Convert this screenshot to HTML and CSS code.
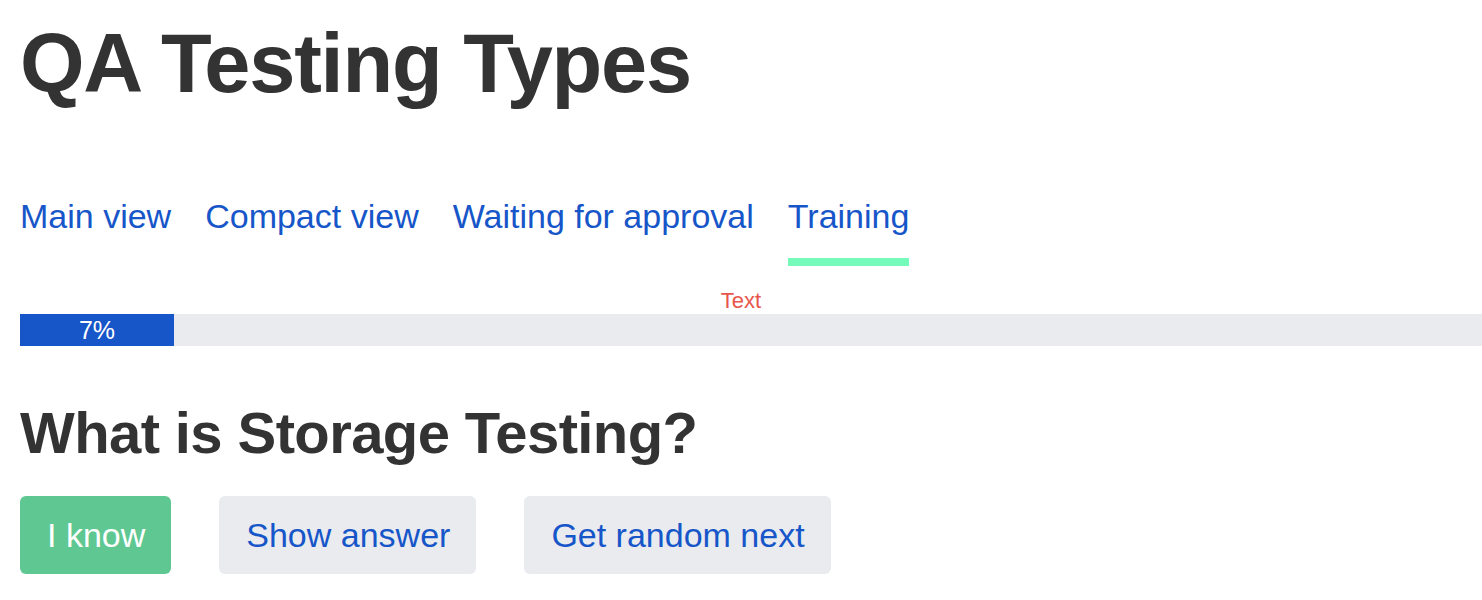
FILE: index.html
```html
<!DOCTYPE html>
<html lang="en">
<head>
<meta charset="utf-8">
<title>QA Testing Types</title>
<link rel="stylesheet" href="styles.css">
</head>
<body>
<div class="page">
  <h1 class="title">QA Testing Types</h1>
  <nav class="tabs">
    <a class="tab" href="#">Main view</a>
    <a class="tab" href="#">Compact view</a>
    <a class="tab" href="#">Waiting for approval</a>
    <a class="tab tab-active" href="#">Training</a>
  </nav>
  <div class="progress-label">Text</div>
  <div class="progress">
    <div class="progress-fill" style="width:154px">7%</div>
  </div>
  <h2 class="question">What is Storage Testing?</h2>
  <div class="actions">
    <button class="btn btn-success">I know</button>
    <button class="btn btn-light">Show answer</button>
    <button class="btn btn-light">Get random next</button>
  </div>
</div>
</body>
</html>
```

FILE: styles.css
```css
html, body {
  margin: 0;
  padding: 0;
  background: #ffffff;
  overflow: hidden;
}

body {
  font-family: "Liberation Sans", Arial, Helvetica, sans-serif;
  color: #333333;
}

.page {
  padding: 0 20px;
}

.title {
  margin: 22px 0 0 0;
  font-size: 83px;
  line-height: 84px;
  font-weight: bold;
  letter-spacing: -1.2px;
  color: #333333;
}

.tabs {
  display: flex;
  gap: 34px;
  margin-top: 90px;
}

.tab {
  display: block;
  font-size: 34px;
  line-height: 40px;
  color: #1656c9;
  text-decoration: none;
  padding-bottom: 22px;
  border-bottom: 8px solid transparent;
}

.tab-active {
  border-bottom-color: #74fbba;
}

.progress-label {
  margin-top: 21px;
  text-align: center;
  font-size: 22px;
  line-height: 27px;
  color: #e8554a;
}

.progress {
  height: 32px;
  background: #e9ebef;
  margin-right: -20px;
  display: flex;
}

.progress-fill {
  background: #1756c8;
  color: #ffffff;
  font-size: 25px;
  line-height: 32px;
  text-align: center;
}

.question {
  margin: 55px 0 0 0;
  font-size: 58px;
  line-height: 64px;
  font-weight: bold;
  letter-spacing: -0.6px;
  color: #333333;
}

.actions {
  display: flex;
  gap: 48px;
  margin-top: 31px;
}

.btn {
  font-family: "Liberation Sans", Arial, Helvetica, sans-serif;
  font-size: 34px;
  line-height: 38px;
  padding: 20px 26px 20px 27px;
  border: none;
  border-radius: 6px;
  cursor: pointer;
}

.btn-success {
  background: #5ec792;
  color: #ffffff;
}

.btn-light {
  background: #e9ebef;
  color: #1656c9;
}
```
